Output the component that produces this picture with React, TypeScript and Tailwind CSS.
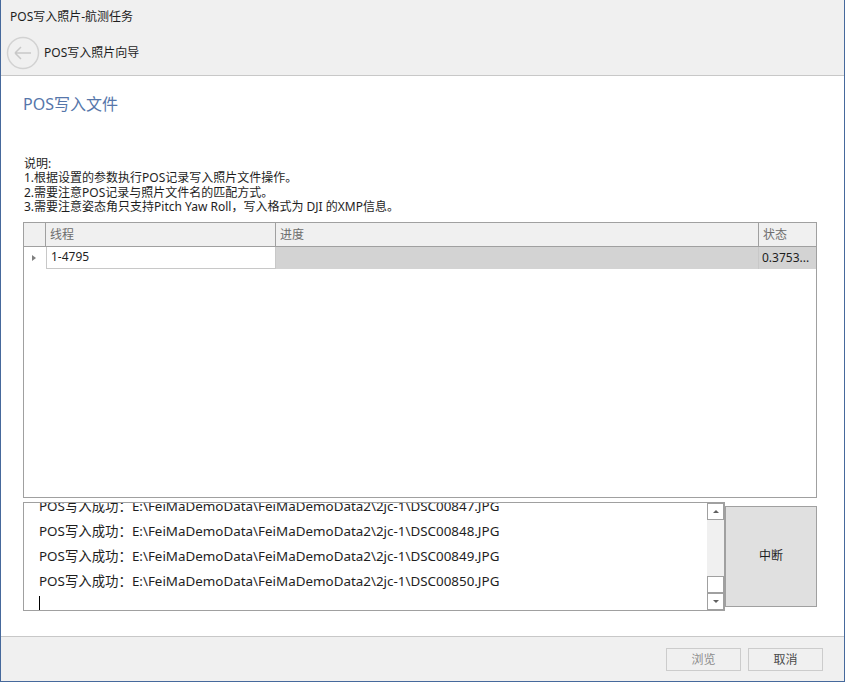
const font = { fontFamily: '"Noto Sans", "Noto Sans CJK SC", sans-serif' };

const logLines = [
  "E:\\FeiMaDemoData\\FeiMaDemoData2\\2jc-1\\DSC00847.JPG",
  "E:\\FeiMaDemoData\\FeiMaDemoData2\\2jc-1\\DSC00848.JPG",
  "E:\\FeiMaDemoData\\FeiMaDemoData2\\2jc-1\\DSC00849.JPG",
  "E:\\FeiMaDemoData\\FeiMaDemoData2\\2jc-1\\DSC00850.JPG",
];

function ScrollBar() {
  return (
    <div className="flex flex-col w-[17px] bg-[#f0f0f0] h-full">
      <div className="h-[17px] border border-[#a0a0a0] bg-white flex items-center justify-center">
        <div className="w-0 h-0 border-l-[3px] border-r-[3px] border-b-[3px] border-l-transparent border-r-transparent border-b-[#606060]" />
      </div>
      <div className="flex-1" />
      <div className="h-[17px] border border-[#a0a0a0] bg-white" />
      <div className="h-[17px] border border-[#a0a0a0] bg-white flex items-center justify-center">
        <div className="w-0 h-0 border-l-[3px] border-r-[3px] border-t-[3px] border-l-transparent border-r-transparent border-t-[#606060]" />
      </div>
    </div>
  );
}

export default function App() {
  return (
    <div
      className="w-[845px] h-[682px] flex flex-col bg-white border-x border-b border-[#46699c] text-[12px] text-[#1e1e1e] overflow-hidden"
      style={font}
    >
      <div className="h-[76px] bg-[#f0f0f0] border-b border-[#c8c8c8] flex flex-col">
        <div className="pl-[9px] pt-[8px] h-[36px] leading-[18px]">POS写入照片-航测任务</div>
        <div className="flex items-center pl-[5px] gap-[4px]">
          <svg width="34" height="34" viewBox="0 0 34 34">
            <circle cx="17" cy="17" r="15.5" fill="none" stroke="#d2d2d2" strokeWidth="1.5" />
            <path d="M9 17 H25 M9 17 L15 11 M9 17 L15 23" fill="none" stroke="#c8c8c8" strokeWidth="1.5" />
          </svg>
          <span className="leading-[18px]">POS写入照片向导</span>
        </div>
      </div>

      <div className="flex-1 flex flex-col px-[22px]">
        <div className="pt-[17px] text-[16px] text-[#5676aa] leading-[22px]">POS写入文件</div>
        <div className="mt-[42px] pl-[1px] leading-[14.4px]">
          <div>说明:</div>
          <div>1.根据设置的参数执行POS记录写入照片文件操作。</div>
          <div>2.需要注意POS记录与照片文件名的匹配方式。</div>
          <div>3.需要注意姿态角只支持Pitch Yaw Roll，写入格式为 DJI 的XMP信息。</div>
        </div>

        <div className="mt-[7px] w-[794px] h-[276px] border border-[#a0a0a0] bg-white flex flex-col">
          <div className="flex h-[24px] bg-[#f0f0f0] border-b border-[#a0a0a0] text-[#6d6d6d]">
            <div className="w-[22px] border-r border-[#a0a0a0]" />
            <div className="w-[230px] border-r border-[#a0a0a0] pl-[4px] leading-[24px]">线程</div>
            <div className="w-[483px] border-r border-[#a0a0a0] pl-[4px] leading-[24px]">进度</div>
            <div className="flex-1 pl-[4px] leading-[24px]">状态</div>
          </div>
          <div className="flex h-[22px]">
            <div className="w-[22px] flex items-center justify-center">
              <div className="w-0 h-0 border-t-[3.5px] border-b-[3.5px] border-l-[4px] border-t-transparent border-b-transparent border-l-[#808080] -ml-[2px]" />
            </div>
            <div className="w-[230px] border-r border-b border-l border-[#c8c8c8] pl-[4px] leading-[20px] bg-white">1-4795</div>
            <div className="w-[483px] bg-[#d3d3d3] border-r border-[#c8c8c8]" />
            <div className="flex-1 bg-[#d3d3d3] pl-[3px] leading-[21px]">0.3753...</div>
          </div>
        </div>

        <div className="mt-[4px] flex items-start">
          <div className="w-[702px] h-[109px] border border-[#a0a0a0] flex overflow-hidden">
            <div className="flex-1 pl-[15px] relative overflow-hidden">
              <div className="-mt-[9px] flex flex-col">
                {logLines.map((l, i) => (
                  <div key={i} className="h-[25px] leading-[25px] text-[13.4px] whitespace-nowrap">
                    POS写入成功：{l}
                  </div>
                ))}
                <div className="h-[18px] w-px bg-black mt-[2px]" />
              </div>
            </div>
            <ScrollBar />
          </div>
          <div className="mt-[4px] w-[92px] h-[101px] border border-[#a0a0a0] bg-[#e0e0e0] flex items-center justify-center">
            中断
          </div>
        </div>
      </div>

      <div className="h-[45px] bg-[#f0f0f0] border-t border-[#c8c8c8] flex justify-end items-start pt-[11px] pr-[21px] gap-[7px]">
        <div className="w-[75px] h-[23px] border border-[#cccccc] flex items-center justify-center text-[#8c8c8c]">浏览</div>
        <div className="w-[75px] h-[23px] border border-[#cccccc] flex items-center justify-center text-[#4a4a4a]">取消</div>
      </div>
    </div>
  );
}
